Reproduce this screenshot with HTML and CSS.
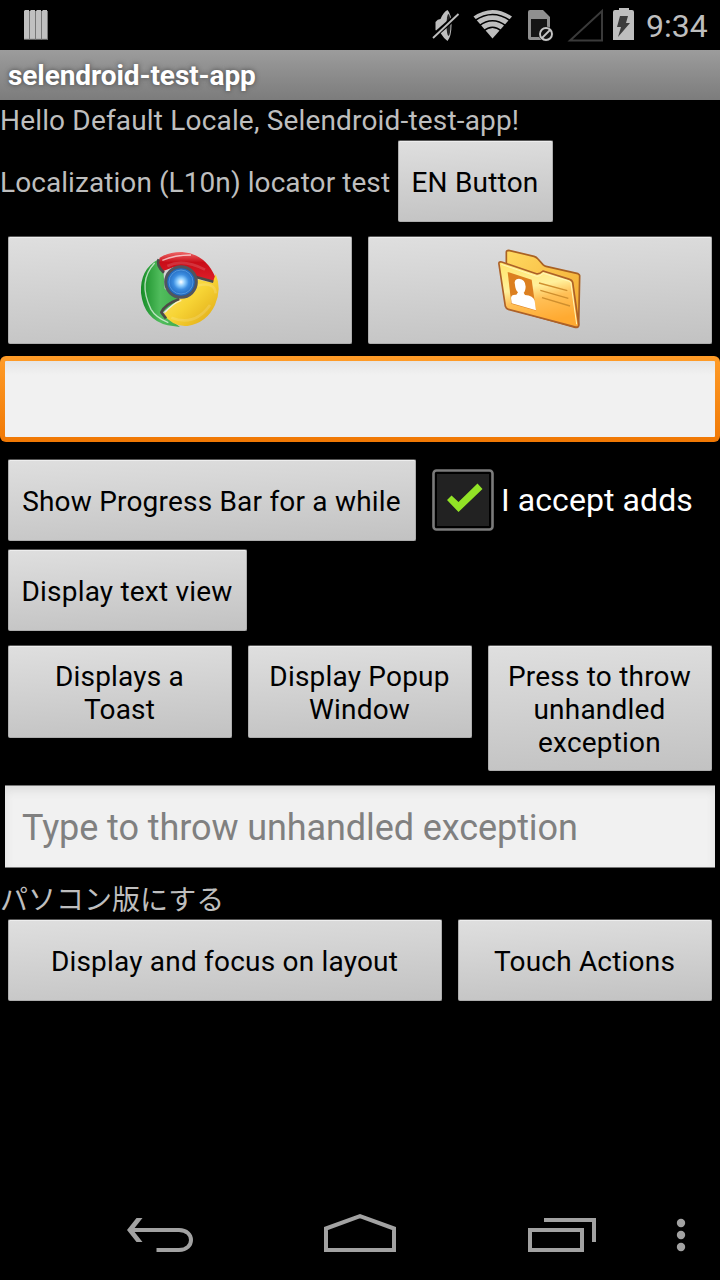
FILE: index.html
```html
<!DOCTYPE html>
<html lang="en">
<head>
<meta charset="utf-8">
<title>selendroid-test-app</title>
<link rel="stylesheet" href="styles.css">
</head>
<body>
<header class="status">
  <svg class="bars" width="24" height="30" viewBox="0 0 24 30"><path fill="#c0c0c0" d="M0 1l1-1h4v29H0zM6 1l1-1h4v29H6zM12 1l1-1h4v29h-5zM18 1l1-1h4v29h-5z"/><path stroke="#777" d="M5.500 1v28.500M11.500 1v28.500M17.500 1v28.500M23.500 1v28.500M0 29.300h24"/></svg>
  <svg class="indicators" width="206" height="50" viewBox="430 0 206 50">
    <g fill="#bebebe">
      <path d="M435.500 22q2-3 5-3 3-7 7-9 4 4 4 15t-4 16q-4-3-7-8-3 0-5-3z"/>
      <ellipse cx="448.500" cy="25" rx="2" ry="11" fill="#222"/>
      <path d="M432 37.500 460 13" stroke="#000" stroke-width="5"/>
      <path d="M433 38 458.500 14" stroke="#bebebe" stroke-width="1.800"/>
      <path d="M492.500 38.500 473.500 16.500Q492.500 3.500 512 16.500Z"/>
      <path d="M475 20.500Q492.500 8.500 510 20.500M479 26Q492.500 15.500 506 26M483.500 31Q492.500 23.500 501.500 31" fill="none" stroke="#000" stroke-width="1.600"/>
    </g>
    <path d="M530 10h13l7 7v22q0 1-1 1h-19q-2 0-2-2V12q0-2 2-2z" fill="#8f8f8f"/>
    <path d="M531 19h16v18h-16z" fill="#151515"/>
    <circle cx="546" cy="34" r="7.500" fill="#151515"/>
    <circle cx="546" cy="34" r="6" fill="#111" stroke="#c5c5c5" stroke-width="1.900"/>
    <path d="M542 38l8-8" stroke="#c5c5c5" stroke-width="1.800"/>
    <path d="M570 40.500H602V11z" fill="none" stroke="#3a3a3a" stroke-width="2"/>
    <path d="M613 12q0-2 2-2h4V8h10v2h3q2 0 2 2v28h-21z" fill="#bebebe"/>
    <path d="M620 16h8l-2 7h4l-12 14 3-10h-4z" fill="#3c3c3c"/>
  </svg>
  <span class="clock">9:34</span>
</header>
<div class="titlebar"><span>selendroid-test-app</span></div>
<main class="content">
  <div class="label hello"><span>Hello Default Locale, Selendroid-test-app!</span></div>
  <div class="row locale">
    <div class="label"><span>Localization (L10n) locator test</span></div>
    <button class="btn en"><span>EN Button</span></button>
  </div>
  <div class="row images">
    <button class="btn grow" aria-label="Chrome">
      <svg class="picture" width="80" height="80" viewBox="60 60 240 240">
        <defs>
          <radialGradient id="blue"><stop offset="0" stop-color="#fff"/><stop offset=".25" stop-color="#90cfff"/><stop offset=".5" stop-color="#3c8de0"/><stop offset="1" stop-color="#175bb0"/></radialGradient>
          <linearGradient id="red" x2="0" y2="1"><stop stop-color="#e66"/><stop offset=".35" stop-color="#c90d18"/><stop offset="1" stop-color="#e01e2a"/></linearGradient>
          <linearGradient id="green" x2="1" y2="0"><stop stop-color="#168c26"/><stop offset=".5" stop-color="#51bd5d"/><stop offset="1" stop-color="#3fab4c"/></linearGradient>
          <linearGradient id="yellow" x2="1" y2="1"><stop stop-color="#ffe872"/><stop offset=".5" stop-color="#f7d435"/><stop offset="1" stop-color="#dda412"/></linearGradient>
        </defs>
        <path d="M115 88Q59 119 63 189 72 269 143 286L180 291 126 249 178 208 134 176 131 132Z" fill="url(#green)"/>
        <path d="M119 83Q149 65 187 66 257 72 286 142L280 156 225 143 160 112 128 124Q112 105 119 83Z" fill="url(#red)"/>
        <path d="M287 132Q306 175 285 225 260 279 202 288 160 292 130 253L175 209 225 185 230 148 278 158Z" fill="url(#yellow)"/>
        <path d="M116 88Q108 107 132 128M220 139 280 155M178 207Q133 224 124 247L138 265" fill="none" stroke="#4c4a48" stroke-width="8" stroke-linejoin="round"/>
        <path d="M127 91Q165 75 213 75M104 99Q52 154 93 238 107 262 145 278M135 247Q159 219 184 211" fill="none" stroke="#fff" stroke-opacity=".65" stroke-width="4"/>
        <path d="M142 108Q190 85 255 119M234 166Q285 155 287 190M154 263Q225 290 270 225" fill="none" stroke="#fff" stroke-opacity=".15" stroke-width="8"/>
        <circle cx="183" cy="156" r="46" fill="url(#blue)" stroke="#51555e" stroke-width="9"/>
        <circle cx="183" cy="156" r="36" fill="none" stroke="#9fd8ff" stroke-opacity=".35" stroke-width="3"/>
      </svg>
    </button>
    <button class="btn grow" aria-label="Contacts">
      <svg class="picture" width="80" height="80" viewBox="60 60 240 240">
        <defs>
          <linearGradient id="back" x2="1" y2="1"><stop stop-color="#ffda61"/><stop offset="1" stop-color="#f2a52c"/></linearGradient>
          <linearGradient id="front" x2=".25" y2="1"><stop stop-color="#ffe469"/><stop offset=".45" stop-color="#fff09b"/><stop offset=".65" stop-color="#ffc057"/><stop offset="1" stop-color="#ffaa31"/></linearGradient>
        </defs>
        <path d="M79 95V66q0-5 7-5l76 18q7 2 12 8l15 17q4 4 9 5l96 22q6 3 5 8l-3 145q-1 10-10 8L84 235z" fill="url(#back)" stroke="#a96123" stroke-width="5" stroke-linejoin="round"/>
        <path d="M57 103q-2-9 8-7l104 35q8 3 20-8l80 25q7 2 9 9l18 126q1 10-9 8L85 238q-7-2-9-9z" fill="url(#front)" stroke="#ad6128" stroke-width="5" stroke-linejoin="round"/>
        <path d="M64 103 170 139q9 1 20-9l76 23q6 2 7 8l17 122" fill="none" stroke="#fff6b8" stroke-width="3"/>
        <path d="M83 126 155 149 168 242 94 221Z" fill="#dc8020"/>
        <path d="M105 165q-5-18 12-19 19 1 20 24-1 14-6 18l4 7q25 2 29 17l4 29-73-21-2-16q0-11 16-10l5-7q-8-7-9-22z" fill="#fff"/>
        <path d="M177 159 262 182M181 181 265 205M186 203 270 228" fill="none" stroke="#cf8f2e" stroke-width="4"/>
      </svg>
    </button>
  </div>
  <div class="field focused"></div>
  <div class="row progress">
    <button class="btn show"><span>Show Progress Bar for a while</span></button>
    <div class="check">
      <svg width="62" height="62" viewBox="0 0 62 62"><rect x="1.500" y="1.500" width="59" height="59" rx="3" fill="#000" stroke="#7b7b7b" stroke-width="2.600"/><rect x="5" y="5" width="52" height="52" fill="#222"/><path d="M15 31 19.500 26.500 26.500 33 45.500 14.500 50.500 20 26.500 43Z" fill="#92e326"/></svg>
      <span>I accept adds</span>
    </div>
  </div>
  <div class="row view"><button class="btn text-view"><span>Display text view</span></button></div>
  <div class="row trio">
    <button class="btn third two-lines"><span>Displays a<br>Toast</span></button>
    <button class="btn third two-lines"><span>Display Popup<br>Window</span></button>
    <button class="btn third three-lines"><span>Press to throw<br>unhandled<br>exception</span></button>
  </div>
  <div class="field hint"><span>Type to throw unhandled exception</span></div>
  <div class="label japanese"><span>パソコン版にする</span></div>
  <div class="row last">
    <button class="btn focus"><span>Display and focus on layout</span></button>
    <button class="btn touch"><span>Touch Actions</span></button>
  </div>
</main>
<nav class="navbar">
  <svg width="720" height="96" viewBox="0 1184 720 96" fill="none" stroke="#a2a2a2" stroke-width="4">
    <path d="M131 1230H179C195 1230 195 1250 179 1250H156.500"/>
    <path d="M136.500 1218H142.500L133 1230 142.500 1242H136.500L127 1230Z" fill="#a2a2a2" stroke="none"/>
    <path d="M326 1250V1228.500L360 1216.200 394 1228.500V1250Z"/>
    <path d="M530 1230H582V1250H530ZM544 1220H594V1242"/>
    <g fill="#a2a2a2" stroke="none"><circle cx="681" cy="1223" r="4.200"/><circle cx="681" cy="1235" r="4.200"/><circle cx="681" cy="1247" r="4.200"/></g>
  </svg>
</nav>
</body>
</html>
```
FILE: styles.css
```css
* { box-sizing: border-box; }
body {
  margin: 0;
  width: 720px;
  height: 1280px;
  display: flex;
  flex-direction: column;
  background: #000;
  color: #bebebe;
  font: 28px/33px Roboto, "Noto Sans CJK JP", sans-serif;
  overflow: hidden;
}
svg { display: block; flex: none; }
span { white-space: nowrap; }
.status { height: 50px; display: flex; align-items: center; padding-left: 24px; }
.indicators { margin-left: 382px; }
.clock { margin-left: 10px; font-size: 32px; padding-top: 2px; }
.titlebar {
  height: 50px;
  display: flex;
  align-items: center;
  padding: 1px 8px 0;
  background: linear-gradient(#9c9c9c, #7c7c7c);
  color: #fff;
  font-weight: 700;
  letter-spacing: -0.08px;
  text-shadow: 0 0 5px #444;
}
.content { flex: 1; display: flex; flex-direction: column; }
.row { display: flex; }
.label { display: flex; align-items: center; }
.hello { height: 40px; letter-spacing: 0.17px; }
.locale { height: 82px; gap: 8px; }
.locale .label { width: 390px; padding-top: 3px; letter-spacing: 0.07px; }
.btn {
  border: 1px solid #adadad;
  border-top-color: #555;
  border-radius: 2px;
  padding: 3px 0 0;
  display: flex;
  align-items: center;
  justify-content: center;
  background: linear-gradient(177deg, #dfdfdf, #c2c2c2);
  box-shadow: inset 0 1px #eee;
  color: #000;
  font: inherit;
  letter-spacing: 0.2px;
  height: 82px;
  text-align: center;
}
.btn span { margin-left: -1px; }
.en { width: 155px; }
.images { padding: 0 8px; gap: 16px; margin-top: 14px; }
.images .btn { height: 108px; padding: 0; }
.grow { flex: 1; }
.picture { overflow: visible; }
.field { background: #f1f1f1; box-shadow: inset 0 5px 8px #dedede; }
.focused {
  margin-top: 12px;
  height: 86px;
  border: 5px solid transparent;
  border-radius: 6px;
  background: linear-gradient(#e5e5e5, #f1f1f1 14px) padding-box, linear-gradient(#ff9c28, #f07804) border-box;
  box-shadow: none;
}
.progress { margin-top: 17px; padding-left: 8px; gap: 16px; }
.show { width: 408px; }
.check { display: flex; align-items: center; gap: 7px; font-size: 32px; color: #fff; letter-spacing: 0.08px; }
.view { margin-top: 8px; padding-left: 8px; }
.text-view { width: 239px; }
.trio { height: 127px; margin-top: 14px; padding: 0 8px; gap: 16px; align-items: flex-start; }
.third { flex: 1; padding-top: 2px; }
.two-lines { height: 93px; }
.three-lines { height: 126px; }
.hint {
  height: 83px;
  margin: 13px 5px 0;
  padding: 4px 0 0 17px;
  border: solid #777;
  border-width: 1px 0;
  display: flex;
  align-items: center;
  font-size: 36px;
  letter-spacing: -0.08px;
  color: #808080;
}
.japanese { height: 51px; padding-top: 14px; }
.last { padding: 0 8px; gap: 16px; }
.focus { width: 434px; }
.touch { width: 254px; }
.navbar { height: 96px; }
```
